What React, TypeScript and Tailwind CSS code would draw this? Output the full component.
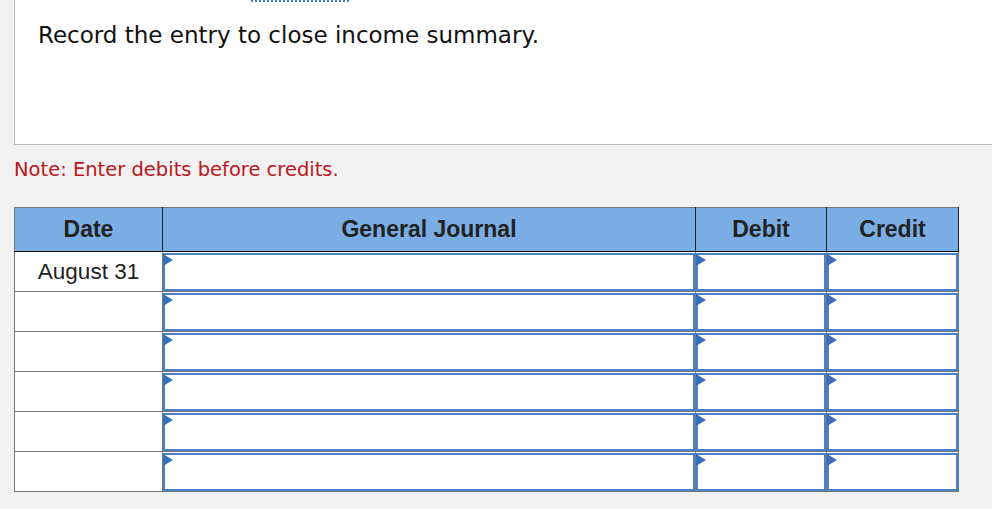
import React from 'react';

const rows = ['August 31', '', '', '', '', ''];

const InputCell: React.FC = () => (
  <td className="border border-[#767676] p-0 bg-white align-top">
    <div className="relative mt-px h-[38px] border-2 border-[#4a80c8] bg-white">
      <span className="absolute -left-[2px] -top-[1px] h-0 w-0 border-y-[6px] border-l-[10px] border-y-transparent border-l-[#3470bb]" />
    </div>
  </td>
);

const App: React.FC = () => {
  return (
    <div className="w-[992px] h-[509px] overflow-hidden bg-[#f2f2f2]">
      {/* Question box */}
      <div className="relative ml-[14px] w-[1000px] h-[145px] border-l border-b border-[#bcbcbc] bg-white">
        <svg className="absolute left-[236px] top-0" width="98" height="2">
          <line x1="0" y1="1" x2="98" y2="1" stroke="#3f7ec9" strokeWidth="2" strokeDasharray="2 2" />
        </svg>
        <p className="pl-[23px] pt-[20px] text-[23px] leading-[30px] text-[#111] font-['DejaVu_Sans',sans-serif]">
          Record the entry to close income summary.
        </p>
      </div>

      {/* Note */}
      <p className="ml-[14px] mt-[13px] text-[19.5px] leading-[24px] text-[#bd161c] font-['DejaVu_Sans',sans-serif]">
        Note: Enter debits before credits.
      </p>

      {/* Journal table */}
      <table className="ml-[14px] mt-[25px] w-[944px] table-fixed border-collapse font-['Liberation_Sans',Arial,sans-serif]">
        <colgroup>
          <col className="w-[148px]" />
          <col className="w-[533px]" />
          <col className="w-[131px]" />
          <col className="w-[132px]" />
        </colgroup>
        <thead>
          <tr className="h-[44px] bg-[#79ade4] text-[23px] font-bold text-[#222]">
            <th className="border-t border-l border-[#767676] border-r border-r-[#222] border-b border-b-[#111]">Date</th>
            <th className="border-t border-[#767676] border-r border-r-[#222] border-b border-b-[#111]">General Journal</th>
            <th className="border-t border-[#767676] border-r border-r-[#222] border-b border-b-[#111]">Debit</th>
            <th className="border-t border-r border-[#767676] border-r-[#222] border-b border-b-[#111]">Credit</th>
          </tr>
        </thead>
        <tbody>
          {rows.map((date, i) => (
            <tr key={i}>
              <td className="border border-[#767676] bg-white text-center text-[22.5px] text-[#222]">
                {date}
              </td>
              <InputCell />
              <InputCell />
              <InputCell />
            </tr>
          ))}
        </tbody>
      </table>
    </div>
  );
};

export default App;
